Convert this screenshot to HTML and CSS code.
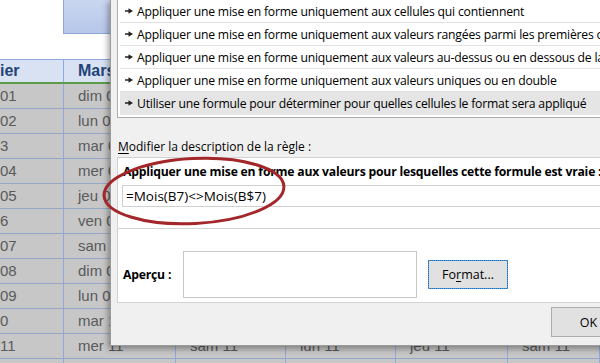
FILE: index.html
```html
<!DOCTYPE html>
<html lang="fr">
<head>
  <meta charset="UTF-8" />
  <title>Mise en forme conditionnelle</title>
  <link rel="stylesheet" href="styles.css">
</head>
<body>

  <div class="sheet">
    <div class="top-area"><div class="shape"></div></div>

    <div class="row head">
      <div class="c c1">ier</div><div class="c">Mars</div><div class="c"></div><div class="c"></div><div class="c"></div><div class="c"></div>
    </div>
    <div class="row"><div class="c c1">01</div><div class="c">dim 01</div><div class="c"></div><div class="c"></div><div class="c"></div><div class="c"></div></div>
    <div class="row"><div class="c c1">02</div><div class="c">lun 02</div><div class="c"></div><div class="c"></div><div class="c"></div><div class="c"></div></div>
    <div class="row"><div class="c c1">3</div><div class="c">mar 03</div><div class="c"></div><div class="c"></div><div class="c"></div><div class="c"></div></div>
    <div class="row"><div class="c c1">04</div><div class="c">mer 04</div><div class="c"></div><div class="c"></div><div class="c"></div><div class="c"></div></div>
    <div class="row"><div class="c c1">05</div><div class="c">jeu 05</div><div class="c"></div><div class="c"></div><div class="c"></div><div class="c"></div></div>
    <div class="row"><div class="c c1">6</div><div class="c">ven 06</div><div class="c"></div><div class="c"></div><div class="c"></div><div class="c"></div></div>
    <div class="row"><div class="c c1">07</div><div class="c">sam 07</div><div class="c"></div><div class="c"></div><div class="c"></div><div class="c"></div></div>
    <div class="row"><div class="c c1">08</div><div class="c">dim 08</div><div class="c"></div><div class="c"></div><div class="c"></div><div class="c"></div></div>
    <div class="row"><div class="c c1">09</div><div class="c">lun 09</div><div class="c"></div><div class="c"></div><div class="c"></div><div class="c"></div></div>
    <div class="row"><div class="c c1">0</div><div class="c">mar 10</div><div class="c"></div><div class="c"></div><div class="c"></div><div class="c"></div></div>
    <div class="row"><div class="c c1">11</div><div class="c">mer 11</div><div class="c">sam 11</div><div class="c">lun 11</div><div class="c">jeu 11</div><div class="c">sam 11</div></div>
    <div class="row"><div class="c c1"></div><div class="c"></div><div class="c"></div><div class="c"></div><div class="c"></div><div class="c"></div></div>
  </div>

  <div class="dialog">
    <ul class="rule-list">
      <li><svg class="arrow" width="8" height="6" viewBox="0 0 8 6"><path d="M0 2.3h3.5V0.2L8 3 3.5 5.8V3.7H0z" fill="#222"/></svg>Appliquer une mise en forme uniquement aux cellules qui contiennent</li>
      <li><svg class="arrow" width="8" height="6" viewBox="0 0 8 6"><path d="M0 2.3h3.5V0.2L8 3 3.5 5.8V3.7H0z" fill="#222"/></svg>Appliquer une mise en forme uniquement aux valeurs rangées parmi les premières ou les dernières valeurs</li>
      <li><svg class="arrow" width="8" height="6" viewBox="0 0 8 6"><path d="M0 2.3h3.5V0.2L8 3 3.5 5.8V3.7H0z" fill="#222"/></svg>Appliquer une mise en forme uniquement aux valeurs au-dessus ou en dessous de la moyenne</li>
      <li><svg class="arrow" width="8" height="6" viewBox="0 0 8 6"><path d="M0 2.3h3.5V0.2L8 3 3.5 5.8V3.7H0z" fill="#222"/></svg>Appliquer une mise en forme uniquement aux valeurs uniques ou en double</li>
      <li class="selected"><svg class="arrow" width="8" height="6" viewBox="0 0 8 6"><path d="M0 2.3h3.5V0.2L8 3 3.5 5.8V3.7H0z" fill="#222"/></svg>Utiliser une formule pour déterminer pour quelles cellules le format sera appliqué</li>
    </ul>

    <div class="desc-label"><u>M</u>odifier la description de la règle :</div>

    <div class="desc-panel">
      <div class="desc-top">
        <div class="desc-title">Appliquer une mise en forme aux valeurs pour lesquelles cette formule est vraie :</div>
        <div class="formula">=Mois(B7)&lt;&gt;Mois(B$7)</div>
      </div>
      <div class="desc-bottom">
        <span class="preview-label">Aperçu :</span>
        <div class="preview"></div>
        <button class="btn btn-focus">Fo<u>r</u>mat...</button>
      </div>
    </div>

    <div class="footer">
      <button class="btn btn-ok">OK</button>
    </div>
  </div>

  <svg class="mark" width="200" height="80" viewBox="0 0 200 80">
    <ellipse cx="94" cy="37" rx="90" ry="32.5" transform="rotate(-3 94 37)" fill="none" stroke="#a3262a" stroke-width="3"/>
  </svg>

</body>
</html>
```

FILE: styles.css
```css
* { box-sizing: border-box; }

body {
  margin: 0;
  width: 600px;
  height: 363px;
  overflow: hidden;
  position: relative;
  background: #fff;
  font-family: 'Open Sans', 'Noto Sans', sans-serif;
}

/* spreadsheet behind the dialog */

.sheet {
  font-family: 'Liberation Sans', Arial, sans-serif;
  font-size: 15px;
  color: #5a5a5a;
}

.top-area {
  height: 59px;
}

.shape {
  margin-left: 63px;
  width: 60px;
  height: 34px;
  background: linear-gradient(#c9d6ef, #b6c7e9);
  border-left: 1px solid #8fa7d6;
  border-bottom: 1px solid #8fa7d6;
}

.row {
  display: grid;
  grid-template-columns: 64px 112px 110px 110px 112px 1fr;
  height: 25px;
  background: #c7c7c7;
  border-bottom: 1px solid #94a7c9;
}

.row.head {
  background: #d9e2f3;
  border-top: 1px solid #8ea9db;
  border-bottom: 2px solid #5d9b4b;
  color: #1f4478;
  font-weight: bold;
  font-size: 16px;
}

.c {
  border-right: 1px solid #8ea9db;
  padding-left: 14px;
  line-height: 24px;
  white-space: nowrap;
  overflow: hidden;
}

.c.c1 {
  padding-left: 0;
}

.head .c {
  line-height: 22px;
}

/* dialog */

.dialog {
  position: absolute;
  left: 110px;
  top: -1px;
  width: 534px;
  height: 347px;
  background: #f0f0f0;
  border-left: 1px solid #9a9a9a;
  border-bottom: 1px solid #9a9a9a;
  box-shadow: -2px 3px 6px rgba(0, 0, 0, 0.35);
  padding: 0 18px 0 6px;
  font-size: 12.2px;
  letter-spacing: -0.2px;
  color: #000;
}

.rule-list {
  list-style: none;
  margin: 0;
  padding: 0 0 2px 2px;
  background: #fff;
  border: 1px solid #abadb3;
  border-right: none;
  margin-right: -30px;
}

.rule-list li {
  display: flex;
  align-items: center;
  height: 23px;
  border-bottom: 1px solid #e3e3e3;
  padding-left: 5px;
  white-space: nowrap;
  overflow: hidden;
}

.rule-list li.selected {
  background: #e5e5e5;
  border-bottom-color: #e5e5e5;
}

.arrow {
  margin-right: 4px;
  flex-shrink: 0;
}

.desc-label {
  margin-top: 21px;
  padding-left: 1px;
  line-height: 16px;
  font-size: 12px;
  letter-spacing: 0;
}

.desc-label u,
.btn u {
  text-decoration-thickness: 1px;
  text-underline-offset: 2px;
}

.desc-panel {
  margin-top: 2px;
  margin-right: -30px;
  background: #fff;
  border: 1px solid #d2d2d2;
  border-right: none;
}

.desc-top {
  padding: 6px 0 21px 4px;
  border-bottom: 1px solid #d2d2d2;
}

.desc-title {
  padding-left: 1px;
  font-weight: bold;
  line-height: 16px;
  white-space: nowrap;
  overflow: hidden;
}

.formula {
  margin-top: 5px;
  height: 22px;
  border: 1px solid #d0d0d0;
  border-right: none;
  padding-left: 3px;
  font-size: 13.5px;
  letter-spacing: 0;
  line-height: 20px;
}

.desc-bottom {
  display: flex;
  align-items: center;
  padding: 22px 0 4px 5px;
}

.preview-label {
  width: 60px;
  font-weight: bold;
}

.preview {
  width: 234px;
  height: 47px;
  border: 1px solid #c6c6c6;
  background: #fff;
}

.btn {
  font-family: inherit;
  font-size: 12.5px;
  color: #000;
  background: #e1e1e1;
  border: 1px solid #adadad;
  padding: 0;
}

.btn-focus {
  margin-left: 11px;
  width: 80px;
  height: 29px;
  border-color: #0078d7;
  outline: 1px dotted #6d8fb8;
  outline-offset: -1px;
}

.footer {
  display: flex;
  justify-content: flex-end;
  margin-top: 4px;
}

.btn-ok {
  width: 75px;
  height: 30px;
}

.mark {
  position: absolute;
  left: 100px;
  top: 154px;
}
```
